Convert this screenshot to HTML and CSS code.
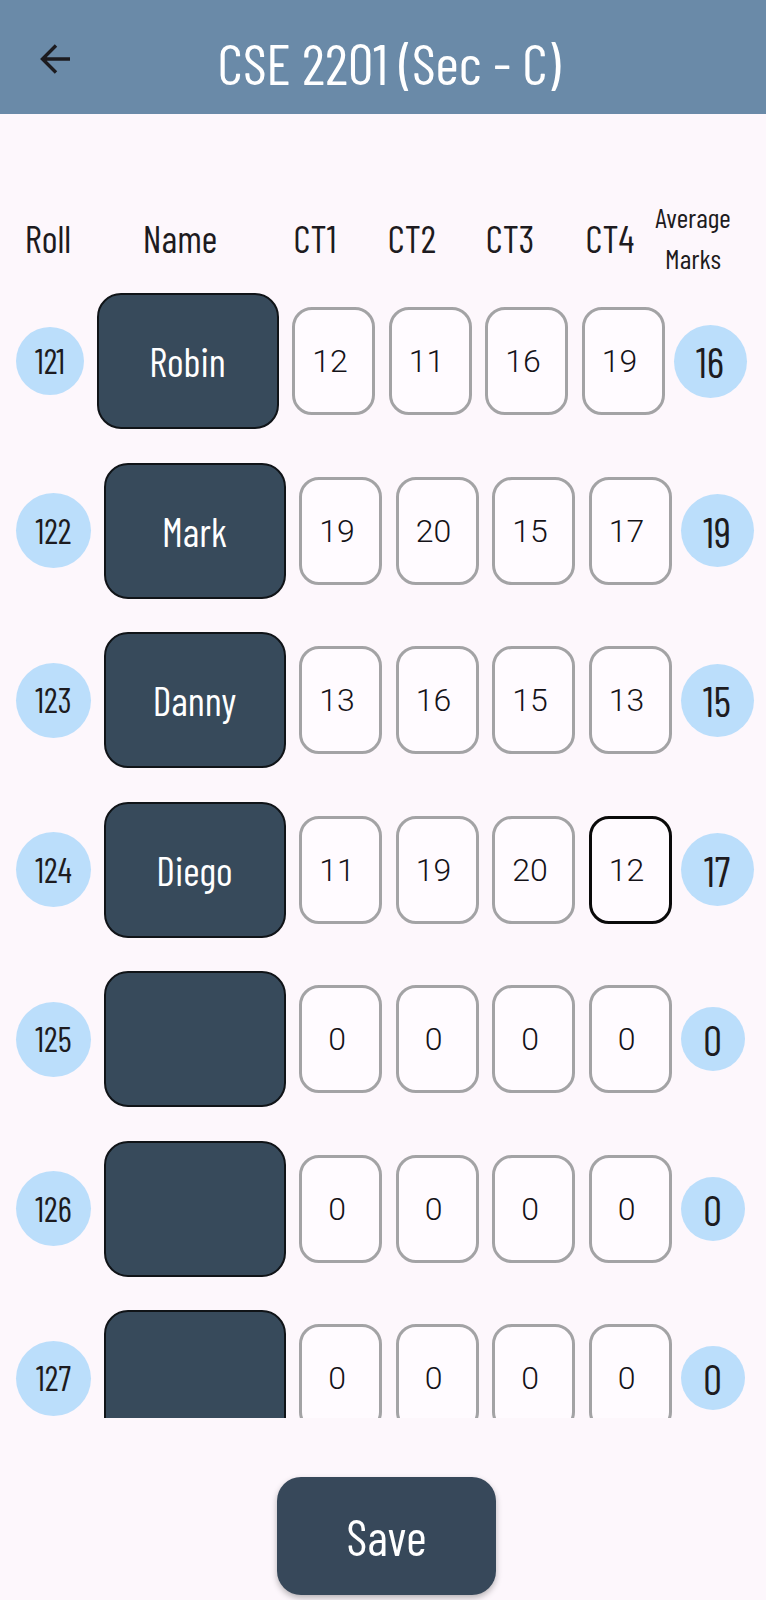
FILE: index.html
```html
<!DOCTYPE html>
<html>
<head>
<meta charset="utf-8">
<link rel="stylesheet" href="styles.css">
</head>
<body>
<div class="screen">
  <header class="appbar">
    <div class="nav">
      <svg class="back" width="34" height="34" viewBox="0 0 34 34">
        <path d="M31 17H4M17 3.5L3.5 17L17 30.5" fill="none" stroke="#1c1b1f" stroke-width="3.4" stroke-linecap="butt" stroke-linejoin="miter"/>
      </svg>
    </div>
    <h1 class="title">CSE 2201 (Sec - C)</h1>
    <div class="nav-end"></div>
  </header>

  <div class="colhead">
    <span>Roll</span>
    <span>Name</span>
    <span>CT1</span>
    <span>CT2</span>
    <span>CT3</span>
    <span>CT4</span>
    <span class="two">Average<br>Marks</span>
  </div>

  <div class="list">
    <div class="row">
      <div class="roll sm">121</div>
      <div class="name">Robin</div>
      <div class="mark">12</div><div class="mark">11</div><div class="mark">16</div><div class="mark">19</div>
      <div class="avg">16</div>
    </div>
    <div class="row">
      <div class="roll">122</div>
      <div class="name">Mark</div>
      <div class="mark">19</div><div class="mark">20</div><div class="mark">15</div><div class="mark">17</div>
      <div class="avg">19</div>
    </div>
    <div class="row">
      <div class="roll">123</div>
      <div class="name">Danny</div>
      <div class="mark">13</div><div class="mark">16</div><div class="mark">15</div><div class="mark">13</div>
      <div class="avg">15</div>
    </div>
    <div class="row">
      <div class="roll">124</div>
      <div class="name">Diego</div>
      <div class="mark">11</div><div class="mark">19</div><div class="mark">20</div><div class="mark focus">12</div>
      <div class="avg">17</div>
    </div>
    <div class="row">
      <div class="roll">125</div>
      <div class="name"></div>
      <div class="mark">0</div><div class="mark">0</div><div class="mark">0</div><div class="mark">0</div>
      <div class="avg sm">0</div>
    </div>
    <div class="row">
      <div class="roll">126</div>
      <div class="name"></div>
      <div class="mark">0</div><div class="mark">0</div><div class="mark">0</div><div class="mark">0</div>
      <div class="avg sm">0</div>
    </div>
    <div class="row">
      <div class="roll">127</div>
      <div class="name"></div>
      <div class="mark">0</div><div class="mark">0</div><div class="mark">0</div><div class="mark">0</div>
      <div class="avg sm">0</div>
    </div>
  </div>

  <div class="actions">
    <button class="save">Save</button>
  </div>
</div>
</body>
</html>
```
FILE: styles.css
```css
* { box-sizing: border-box; }
html, body { margin: 0; padding: 0; }
body {
  background: #fdf7fc;
  font-family: "Barlow Condensed", "Roboto", sans-serif;
  font-stretch: condensed;
  color: #1d1b20;
  width: 766px;
  height: 1600px;
  overflow: hidden;
}
.screen { width: 766px; }

.appbar {
  height: 114px;
  background: #6a8aa8;
  display: grid;
  grid-template-columns: 112px 1fr 100px;
  align-items: center;
}
.nav { display: flex; justify-content: center; padding-top: 4px; }
.back { display: block; }
.title {
  margin: 0;
  text-align: center;
  color: #ffffff;
  font-weight: 400;
  font-size: 57px;
  line-height: 1;
  padding-top: 10px;
  white-space: nowrap;
}

.colhead {
  margin-top: 81px;
  height: 85px;
  display: grid;
  grid-template-columns: 96px 168px 102px 92px 104px 96px 70px;
  align-items: center;
  justify-items: center;
  font-size: 38px;
  line-height: 1;
  white-space: nowrap;
}
.colhead .two {
  font-size: 28px;
  line-height: 41px;
  text-align: center;
}

.list {
  margin-top: 13px;
  height: 1125px;
  overflow: hidden;
  display: flex;
  flex-direction: column;
  gap: 33.5px;
}
.row {
  display: flex;
  align-items: center;
  height: 136px;
  flex: none;
  padding-left: 16px;
}
.roll, .avg {
  flex: none;
  border-radius: 50%;
  background: #bbdefb;
  display: flex;
  align-items: center;
  justify-content: center;
  color: #1d1b20;
  line-height: 1;
}
.roll {
  width: 75px;
  height: 75px;
  font-size: 34px;
  margin-right: 12.5px;
}
.roll.sm { width: 68px; height: 68px; }
.avg {
  width: 73px;
  height: 73px;
  font-size: 42px;
  font-weight: 400;
  margin-left: 9px;
}
.avg.sm { width: 64px; height: 64px; }

.name {
  flex: none;
  width: 182px;
  height: 136px;
  background: #374a5b;
  border: 2px solid #101418;
  border-radius: 24px;
  color: #ffffff;
  font-size: 40px;
  display: flex;
  align-items: center;
  justify-content: center;
  line-height: 1;
  margin-right: 13.5px;
}
.mark {
  flex: none;
  width: 83px;
  height: 108px;
  border: 3px solid #a3a3a5;
  border-radius: 20px;
  background: #fffbff;
  font-family: "Roboto", sans-serif;
  font-stretch: normal;
  font-size: 32px;
  font-weight: 300;
  color: #141218;
  display: flex;
  align-items: center;
  justify-content: center;
  line-height: 1;
  padding-right: 7px;
}
.mark + .mark { margin-left: 13.5px; }
.mark.focus { border-color: #0a0a0a; }

.actions {
  margin-top: 59px;
  display: flex;
  justify-content: center;
  padding-left: 7px;
}
.save {
  width: 219px;
  height: 118px;
  border: none;
  border-radius: 24px;
  background: #37485a;
  color: #ffffff;
  font-family: "Barlow Condensed", "Roboto", sans-serif;
  font-stretch: condensed;
  font-size: 50px;
  font-weight: 400;
  line-height: 1;
  box-shadow: 0 3px 6px rgba(0,0,0,0.28);
  padding: 0;
}
```
